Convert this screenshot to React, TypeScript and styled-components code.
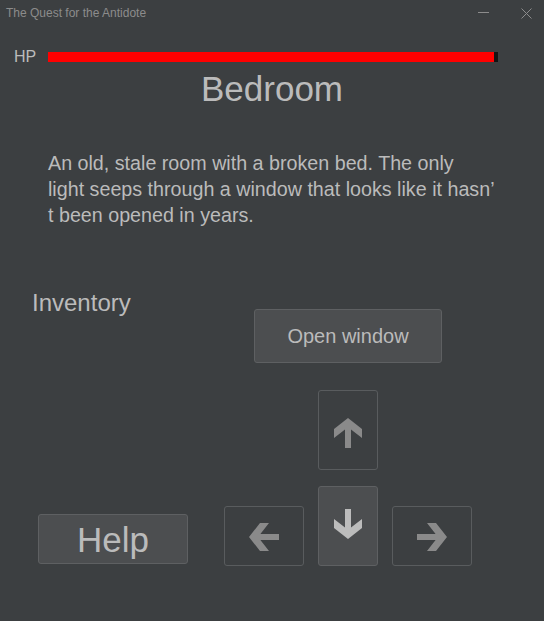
import React from "react";
import styled, { createGlobalStyle } from "styled-components";

const GlobalStyle = createGlobalStyle`
  html, body { margin: 0; padding: 0; background: #3c3f41; }
  body { font-family: "Liberation Sans", Arial, sans-serif; color: #bbbbbb; }
  * { box-sizing: border-box; }
`;

const Window = styled.div`
  width: 544px;
  height: 621px;
  background: #3c3f41;
  display: flex;
  flex-direction: column;
  overflow: hidden;
`;

const TitleBar = styled.div`
  height: 26px;
  display: flex;
  align-items: center;
  padding: 0 12px 0 6px;
  gap: 32px;
`;

const WindowTitle = styled.span`
  font-size: 12px;
  color: #8c8c8c;
  margin-right: auto;
`;

const TitleIcon = styled.svg`
  width: 11px;
  height: 11px;
  display: block;
  stroke: #8c8c8c;
  stroke-width: 1;
  fill: none;
`;

const HpRow = styled.div`
  display: flex;
  align-items: center;
  height: 10px;
  margin-top: 26px;
  padding-left: 14px;
  gap: 12px;
`;

const HpLabel = styled.span`
  font-size: 16px;
  line-height: 10px;
  width: 22px;
`;

const HpTrack = styled.div`
  width: 450px;
  height: 10px;
  background: #141414;
  display: flex;
`;

const HpFill = styled.div`
  height: 100%;
  background: #ff0000;
`;

const RoomTitle = styled.h1`
  margin: 9px 0 0;
  font-size: 35px;
  line-height: 1;
  font-weight: normal;
  text-align: center;
`;

const Description = styled.p`
  margin: 44px 0 0 48px;
  font-size: 19.7px;
  line-height: 26px;
  white-space: pre;
`;

const Lower = styled.div`
  display: flex;
  padding-left: 32px;
`;

const LeftCol = styled.div`
  width: 192px;
  display: flex;
  flex-direction: column;
  align-items: flex-start;
`;

const SectionLabel = styled.div`
  margin-top: 63px;
  font-size: 24px;
  line-height: 1;
`;

const HelpButton = styled.button`
  margin: auto 0 2px 6px;
  width: 150px;
  height: 50px;
  padding: 0;
  background: #4c4e50;
  border: 1px solid #5e6062;
  border-radius: 3px;
  color: #bbbbbb;
  font-family: inherit;
  font-size: 35px;
  line-height: 1;
`;

const RightCol = styled.div`
  width: 248px;
  display: flex;
  flex-direction: column;
  align-items: center;
`;

const ActionButton = styled.button`
  margin-top: 81px;
  width: 188px;
  height: 54px;
  padding: 0;
  background: #4c4e50;
  border: 1px solid #5e6062;
  border-radius: 3px;
  color: #bbbbbb;
  font-family: inherit;
  font-size: 20px;
`;

const Pad = styled.div`
  margin-top: 27px;
  display: flex;
  flex-direction: column;
  align-items: center;
  gap: 16px;
`;

const PadRow = styled.div`
  display: flex;
  align-items: flex-end;
  gap: 14px;
`;

const DirButton = styled.button<{ $wide?: boolean; $active?: boolean }>`
  width: ${(p) => (p.$wide ? 80 : 60)}px;
  height: ${(p) => (p.$wide ? 60 : 80)}px;
  padding: 0;
  display: flex;
  align-items: center;
  justify-content: center;
  background: ${(p) => (p.$active ? "#4c4e50" : "transparent")};
  border: 1px solid ${(p) => (p.$active ? "#5e6062" : "#595c5e")};
  border-radius: 3px;
  color: ${(p) => (p.$active ? "#bcbcbc" : "#8a8a8a")};
`;

const ArrowSvg = styled.svg<{ $rot: number; $nudge: number }>`
  width: 28px;
  height: 30px;
  display: block;
  fill: currentColor;
  transform: translateY(${(p) => p.$nudge}px) rotate(${(p) => p.$rot}deg);
`;

type Dir = "up" | "down" | "left" | "right";
const rotations: Record<Dir, number> = { up: 0, right: 90, down: 180, left: -90 };
const nudges: Record<Dir, number> = { up: 3, right: 1, down: -2, left: 1 };

const Arrow = ({ dir }: { dir: Dir }) => (
  <ArrowSvg $rot={rotations[dir]} $nudge={nudges[dir]} viewBox="0 0 28 30">
    <polygon points="14,0 28,11 28,20 17,11.4 17,30 11,30 11,11.4 0,20 0,11" />
  </ArrowSvg>
);

export default function App() {
  const hp = 99;
  const maxHp = 100;
  return (
    <>
      <GlobalStyle />
      <Window>
        <TitleBar>
          <WindowTitle>The Quest for the Antidote</WindowTitle>
          <TitleIcon viewBox="0 0 11 11">
            <line x1="0" y1="4.5" x2="11" y2="4.5" />
          </TitleIcon>
          <TitleIcon viewBox="0 0 11 11">
            <line x1="0.5" y1="0.5" x2="10.5" y2="10.5" />
            <line x1="10.5" y1="0.5" x2="0.5" y2="10.5" />
          </TitleIcon>
        </TitleBar>
        <HpRow>
          <HpLabel>HP</HpLabel>
          <HpTrack>
            <HpFill style={{ width: `${(hp / maxHp) * 100}%` }} />
          </HpTrack>
        </HpRow>
        <RoomTitle>Bedroom</RoomTitle>
        <Description>
          {"An old, stale room with a broken bed. The only\nlight seeps through a window that looks like it hasn\u2019\nt been opened in years."}
        </Description>
        <Lower>
          <LeftCol>
            <SectionLabel>Inventory</SectionLabel>
            <HelpButton>Help</HelpButton>
          </LeftCol>
          <RightCol>
            <ActionButton>Open window</ActionButton>
            <Pad>
              <DirButton aria-label="North">
                <Arrow dir="up" />
              </DirButton>
              <PadRow>
                <DirButton $wide aria-label="West">
                  <Arrow dir="left" />
                </DirButton>
                <DirButton $active aria-label="South">
                  <Arrow dir="down" />
                </DirButton>
                <DirButton $wide aria-label="East">
                  <Arrow dir="right" />
                </DirButton>
              </PadRow>
            </Pad>
          </RightCol>
        </Lower>
      </Window>
    </>
  );
}
